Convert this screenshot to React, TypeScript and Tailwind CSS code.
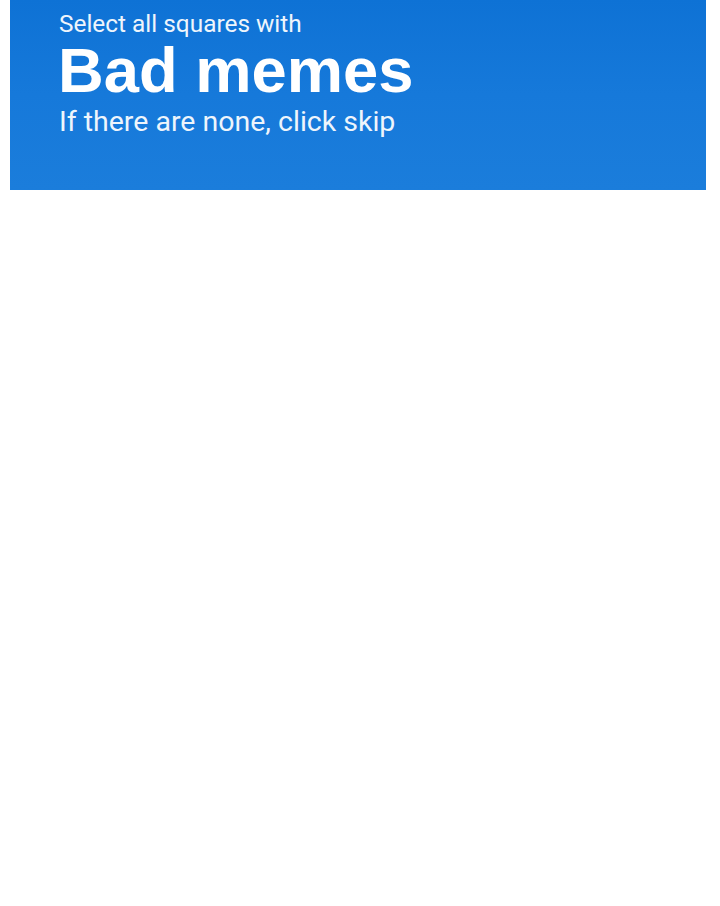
export default function App() {
  return (
    <div className="h-[906px] w-[720px] bg-white">
      <div className="ml-[10px] h-[190px] w-[696px] bg-gradient-to-b from-[#0e72d5] via-[#1679da] to-[#1b7ddb] pl-[49px] pt-[10px] text-white">
        <p className="font-['Roboto',sans-serif] text-[24.4px] leading-[28px] text-[#eef5fc]">
          Select all squares with
        </p>
        <h1 className="-ml-[1px] font-['Liberation_Sans',Arial,sans-serif] text-[63.3px] font-bold leading-[64px]">
          Bad memes
        </h1>
        <p className="mt-[2px] font-['Roboto',sans-serif] text-[28.5px] leading-[36px] text-[#eef5fc]">
          If there are none, click skip
        </p>
      </div>
    </div>
  );
}
